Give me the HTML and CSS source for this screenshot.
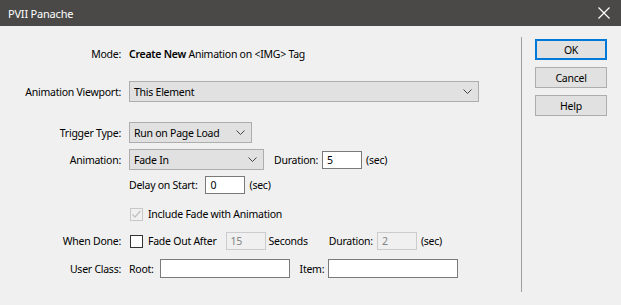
FILE: index.html
```html
<!DOCTYPE html>
<html lang="en">
  <head>
    <meta charset="UTF-8" />
    <title>PVII Panache</title>
    <link rel="stylesheet" href="styles.css">
  </head>
  <body>
    <div class="titlebar">
      <span class="title">PVII Panache</span>
      <svg class="close" width="12" height="12" viewBox="0 0 12 12">
        <path d="M0.5 0.5 L11.5 11.5 M11.5 0.5 L0.5 11.5" stroke="#fff" stroke-width="1.2" fill="none" />
      </svg>
    </div>

    <div class="dialog">
      <form class="form" autocomplete="off">
        <div class="row rowMode">
          <label class="lbl">Mode:</label>
          <div class="ctl"><b>Create New</b>&nbsp;Animation on &lt;IMG&gt; Tag</div>
        </div>

        <div class="row rowViewport">
          <label class="lbl">Animation Viewport:</label>
          <div class="ctl">
            <div class="select wide">
              <span>This Element</span>
              <svg width="9" height="5" viewBox="0 0 9 5"><path d="M0.5 0.5 L4.5 4.5 L8.5 0.5" stroke="#444" fill="none" /></svg>
            </div>
          </div>
        </div>

        <div class="row rowTrigger">
          <label class="lbl">Trigger Type:</label>
          <div class="ctl">
            <div class="select trigger">
              <span>Run on Page Load</span>
              <svg width="9" height="5" viewBox="0 0 9 5"><path d="M0.5 0.5 L4.5 4.5 L8.5 0.5" stroke="#444" fill="none" /></svg>
            </div>
          </div>
        </div>

        <div class="row rowAnim">
          <label class="lbl">Animation:</label>
          <div class="ctl">
            <div class="select anim">
              <span>Fade In</span>
              <svg width="9" height="5" viewBox="0 0 9 5"><path d="M0.5 0.5 L4.5 4.5 L8.5 0.5" stroke="#444" fill="none" /></svg>
            </div>
            <span class="txt durLbl">Duration:</span>
            <input class="num" type="text" value="5" />
            <span class="txt">(sec)</span>
          </div>
        </div>

        <div class="row rowDelay">
          <label class="lbl"></label>
          <div class="ctl">
            <span class="txt delayLbl">Delay on Start:</span>
            <input class="num" type="text" value="0" />
            <span class="txt">(sec)</span>
          </div>
        </div>

        <div class="row rowInclude">
          <label class="lbl"></label>
          <div class="ctl">
            <span class="check disabled">
              <svg width="11" height="11" viewBox="0 0 11 11"><path d="M1.5 5.5 L4 8 L9.5 2" stroke="#c2c2c2" stroke-width="1.3" fill="none" /></svg>
            </span>
            <span class="txt">Include Fade with Animation</span>
          </div>
        </div>

        <div class="row rowDone">
          <label class="lbl">When Done:</label>
          <div class="ctl">
            <span class="check"></span>
            <span class="txt fadeAfter">Fade Out After</span>
            <input class="num off tight" type="text" value="15" disabled />
            <span class="txt">Seconds</span>
            <span class="txt dur2">Duration:</span>
            <input class="num off" type="text" value="2" disabled />
            <span class="txt">(sec)</span>
          </div>
        </div>

        <div class="row rowClass">
          <label class="lbl">User Class:</label>
          <div class="ctl">
            <span class="txt rootLbl">Root:</span>
            <input class="cls" type="text" value="" />
            <span class="txt itemLbl">Item:</span>
            <input class="cls" type="text" value="" />
          </div>
        </div>
      </form>

      <div class="actions">
        <button class="btn ok">OK</button>
        <button class="btn">Cancel</button>
        <button class="btn">Help</button>
      </div>
    </div>
  </body>
</html>
```

FILE: styles.css
```css
html {
  font-family: 'Noto Sans', sans-serif;
  font-size: 10.5px;
  letter-spacing: -0.25px;
  color: #000;
}
body {
  margin: 0;
  width: 621px;
  height: 305px;
  overflow: hidden;
  background: #f0f0f0;
}
.titlebar {
  height: 26px;
  background: #4a4948;
  display: flex;
  align-items: center;
  justify-content: space-between;
  padding: 0 11px 0 8px;
  color: #fff;
}
.title {
  font-size: 11px;
  letter-spacing: -0.2px;
}
.dialog {
  display: flex;
}
.form {
  width: 521px;
  margin: 0;
}
.row {
  display: flex;
  align-items: center;
}
.lbl {
  width: 121px;
  text-align: right;
  flex-shrink: 0;
  white-space: nowrap;
}
.ctl {
  margin-left: 8px;
  display: flex;
  align-items: center;
  white-space: nowrap;
}
.ctl b {
  font-weight: 600;
}
.rowMode {
  margin-top: 18px;
  height: 20px;
}
.rowViewport {
  margin-top: 17px;
  height: 21px;
}
.rowTrigger {
  margin-top: 20px;
  height: 21px;
}
.rowAnim {
  margin-top: 6px;
  height: 21px;
}
.rowDelay {
  margin-top: 6px;
  height: 18px;
}
.rowInclude {
  margin-top: 11px;
  height: 18px;
}
.rowDone {
  margin-top: 9px;
  height: 18px;
}
.rowClass {
  margin-top: 9px;
  height: 19px;
}
.select {
  box-sizing: border-box;
  height: 21px;
  background: #e1e1e1;
  border: 1px solid #adadad;
  display: flex;
  align-items: center;
  justify-content: space-between;
  padding: 0 6px 0 4px;
}
.select.wide {
  width: 350px;
}
.select.trigger {
  width: 123px;
}
.select.anim {
  width: 135px;
}
.txt {
  margin-right: 4px;
}
.durLbl {
  margin-left: 10px;
}
.delayLbl {
  margin-right: 8px;
}
input {
  box-sizing: border-box;
  font: inherit;
  letter-spacing: inherit;
  height: 18px;
  border: 1px solid #7a7a7a;
  background: #fff;
  padding: 0 4px;
  margin: 0 4px 0 0;
  outline: none;
}
.num {
  width: 40px;
}
input.off {
  background: #f0f0f0;
  border-color: #cccccc;
  color: #838383;
}
input.tight {
  margin-right: 3px;
}
.fadeAfter {
  margin-right: 9px;
}
.dur2 {
  margin-left: 17px;
}
.rootLbl {
  margin-right: 6px;
}
.cls {
  width: 130px;
  height: 19px;
}
.itemLbl {
  margin-left: 6px;
}
.check {
  box-sizing: border-box;
  width: 13px;
  height: 13px;
  border: 1px solid #333;
  background: #fff;
  margin: 0 5px 0 1px;
  display: flex;
  align-items: center;
  justify-content: center;
}
.check.disabled {
  border-color: #c8c8c8;
  background: #f0f0f0;
}
.actions {
  margin-top: 11px;
  height: 253px;
  border-left: 1px solid #a0a0a0;
  padding: 2px 0 0 13px;
  display: flex;
  flex-direction: column;
  gap: 7px;
}
.btn {
  box-sizing: border-box;
  width: 72px;
  height: 21px;
  font: inherit;
  letter-spacing: inherit;
  background: #e1e1e1;
  border: 1px solid #adadad;
  padding: 0;
  color: #000;
}
.btn.ok {
  border: 2px solid #0078d7;
}
```
